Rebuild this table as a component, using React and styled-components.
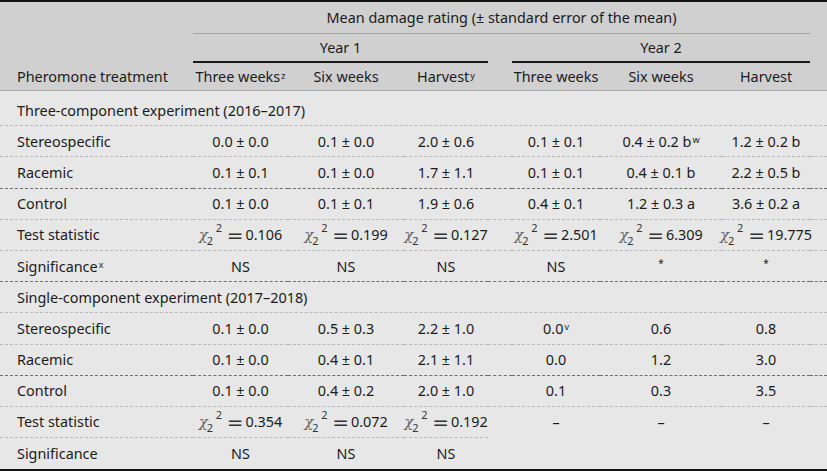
import styled, { createGlobalStyle } from 'styled-components';

const GlobalStyle = createGlobalStyle`
    html, body { margin: 0; padding: 0; background: #e7e7e7; }
    body { font-family: "Noto Sans", "Open Sans", sans-serif; color: #1b1b1b; }
`;

const COLS = '193px 95px 116px 84px 24px 88px 122px 88px 17px';

const Table = styled.div`
    width: 827px;
    height: 471px;
    box-sizing: border-box;
    border-top: 2px solid #111;
    border-bottom: 2px solid #111;
    background: #e7e7e7;
    font-size: 14.4px;
    display: flex;
    flex-direction: column;
`;

const Head = styled.div`
    background: #d0d0d0;
    display: flex;
    flex-direction: column;
`;

const HeadRow = styled.div`
    display: grid;
    grid-template-columns: ${COLS};
    height: ${p => p.$h}px;
    box-sizing: border-box;
    border-bottom: ${p => (p.$rule ? '1px solid #a9a9a9' : 'none')};
`;

const Span = styled.div`
    grid-column: ${p => p.$cols};
    display: flex;
    align-items: center;
    justify-content: center;
    box-sizing: border-box;
    border-bottom: ${p => p.$line || 'none'};
`;

const HeadCell = styled.div`
    display: flex;
    align-items: center;
    justify-content: ${p => (p.$left ? 'flex-start' : 'center')};
    padding-left: ${p => (p.$left ? '17px' : '0')};
    white-space: nowrap;
`;

const Body = styled.div`
    padding-top: 4px;
    display: flex;
    flex-direction: column;
`;

const Row = styled.div`
    display: grid;
    grid-template-columns: ${COLS};
    height: 31.2px;
    box-sizing: border-box;
    & > * {
        border-bottom: ${p =>
            p.$rule === 'dark' ? '1px dashed #6e6e6e' : p.$rule === 'light' ? '1px dashed #b9b9b9' : 'none'};
    }
`;

const Cell = styled.div`
    display: flex;
    align-items: center;
    justify-content: ${p => (p.$left ? 'flex-start' : 'center')};
    padding-left: ${p => (p.$left ? '17px' : '0')};
    white-space: nowrap;
    box-sizing: border-box;
    &&& { ${p => (p.$bare ? 'border-bottom: none;' : '')} }
`;

const Section = styled.div`
    grid-column: 1 / -1;
    display: flex;
    align-items: center;
    padding-left: 17px;
    white-space: nowrap;
`;

const Sup = styled.sup`
    font-size: 9px;
    line-height: 0;
    position: relative;
    top: -1px;
    margin-left: 1px;
`;

const Star = styled.span`
    font-size: 10px;
    position: relative;
    top: -3px;
`;

const Stat = styled.span`
    display: inline-flex;
    align-items: center;
`;

const Chi = styled.span`
    font-family: "DejaVu Serif", "Liberation Serif", serif;
    font-style: italic;
    font-size: 15px;
    color: #666;
    position: relative;
    padding-right: 14px;
`;

const Sub = styled.span`
    position: absolute;
    font-family: "Noto Sans", sans-serif;
    font-style: normal;
    font-size: 11px;
    color: #333;
    left: 8px;
    top: 7px;
`;

const Pow = styled.span`
    position: absolute;
    font-family: "Noto Sans", sans-serif;
    font-style: normal;
    font-size: 11px;
    color: #333;
    left: 17px;
    top: -6px;
`;

const Eq = styled.span`
    font-family: "DejaVu Sans", sans-serif;
    font-size: 20px;
    line-height: 1;
    margin: 0 2px 0 5px;
    color: #333;
`;

function Chi2({ value }) {
    return (
        <Stat>
            <Chi>χ<Sub>2</Sub><Pow>2</Pow></Chi>
            <Eq>=</Eq>
            {value}
        </Stat>
    );
}

const rows = [
    { section: 'Three-component experiment (2016–2017)', rule: 'light' },
    { label: 'Stereospecific', rule: 'light', vals: ['0.0 ± 0.0', '0.1 ± 0.0', '2.0 ± 0.6', '0.1 ± 0.1', <>0.4 ± 0.2 b<Sup>w</Sup></>, '1.2 ± 0.2 b'] },
    { label: 'Racemic', rule: 'dark', vals: ['0.1 ± 0.1', '0.1 ± 0.0', '1.7 ± 1.1', '0.1 ± 0.1', '0.4 ± 0.1 b', '2.2 ± 0.5 b'] },
    { label: 'Control', rule: 'light', vals: ['0.1 ± 0.0', '0.1 ± 0.1', '1.9 ± 0.6', '0.4 ± 0.1', '1.2 ± 0.3 a', '3.6 ± 0.2 a'] },
    { label: 'Test statistic', rule: 'light', vals: [<Chi2 value="0.106" />, <Chi2 value="0.199" />, <Chi2 value="0.127" />, <Chi2 value="2.501" />, <Chi2 value="6.309" />, <Chi2 value="19.775" />] },
    { label: <>Significance<Sup>x</Sup></>, rule: 'dark', vals: ['NS', 'NS', 'NS', 'NS', <Star>*</Star>, <Star>*</Star>] },
    { section: 'Single-component experiment (2017–2018)', rule: 'light' },
    { label: 'Stereospecific', rule: 'light', vals: ['0.1 ± 0.0', '0.5 ± 0.3', '2.2 ± 1.0', <>0.0<Sup>v</Sup></>, '0.6', '0.8'] },
    { label: 'Racemic', rule: 'dark', vals: ['0.1 ± 0.0', '0.4 ± 0.1', '2.1 ± 1.1', '0.0', '1.2', '3.0'] },
    { label: 'Control', rule: 'light', vals: ['0.1 ± 0.0', '0.4 ± 0.2', '2.0 ± 1.0', '0.1', '0.3', '3.5'] },
    { label: 'Test statistic', rule: 'light', partial: true, vals: [<Chi2 value="0.354" />, <Chi2 value="0.072" />, <Chi2 value="0.192" />, '–', '–', '–'] },
    { label: 'Significance', rule: 'none', vals: ['NS', 'NS', 'NS', '', '', ''] },
];

export default function App() {
    return (
        <>
            <GlobalStyle />
            <Table>
                <Head>
                    <HeadRow $h={32}>
                        <div />
                        <Span $cols="2 / 9" $line="1px solid #a3a3a3">Mean damage rating (± standard error of the mean)</Span>
                    </HeadRow>
                    <HeadRow $h={29}>
                        <div />
                        <Span $cols="2 / 5" $line="2px solid #1a1a1a">Year 1</Span>
                        <div />
                        <Span $cols="6 / 9" $line="2px solid #1a1a1a">Year 2</Span>
                    </HeadRow>
                    <HeadRow $h={28} $rule>
                        <HeadCell $left>Pheromone treatment</HeadCell>
                        <HeadCell>Three weeks<Sup>z</Sup></HeadCell>
                        <HeadCell>Six weeks</HeadCell>
                        <HeadCell>Harvest<Sup>y</Sup></HeadCell>
                        <div />
                        <HeadCell>Three weeks</HeadCell>
                        <HeadCell>Six weeks</HeadCell>
                        <HeadCell>Harvest</HeadCell>
                    </HeadRow>
                </Head>
                <Body>
                    {rows.map((r, i) =>
                        r.section ? (
                            <Row key={i} $rule={r.rule}>
                                <Section>{r.section}</Section>
                            </Row>
                        ) : (
                            <Row key={i} $rule={r.rule}>
                                <Cell $left>{r.label}</Cell>
                                <Cell>{r.vals[0]}</Cell>
                                <Cell>{r.vals[1]}</Cell>
                                <Cell>{r.vals[2]}</Cell>
                                <Cell $bare={r.partial} />
                                <Cell $bare={r.partial}>{r.vals[3]}</Cell>
                                <Cell $bare={r.partial}>{r.vals[4]}</Cell>
                                <Cell $bare={r.partial}>{r.vals[5]}</Cell>
                                <Cell $bare={r.partial} />
                            </Row>
                        )
                    )}
                </Body>
            </Table>
        </>
    );
}
